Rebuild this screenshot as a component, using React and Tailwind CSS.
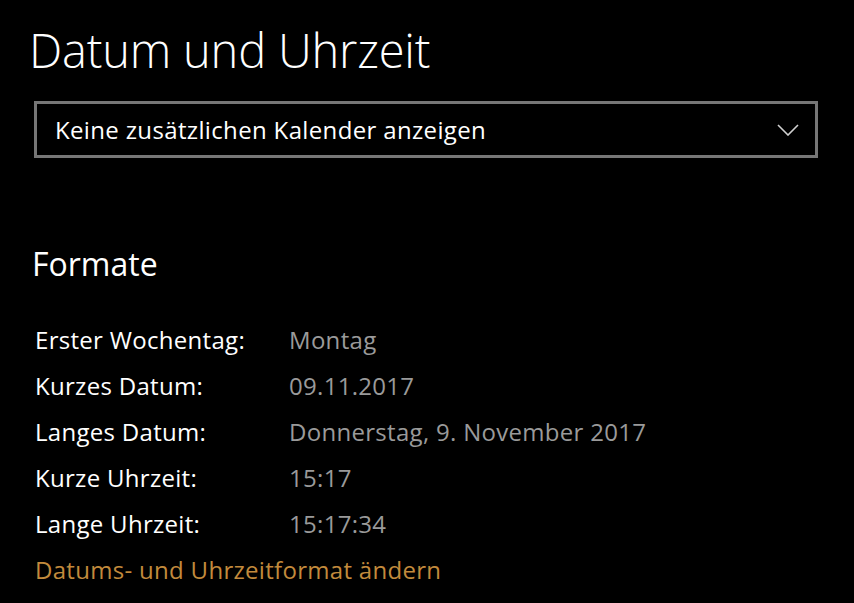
const rows = [
  ['Erster Wochentag:', 'Montag'],
  ['Kurzes Datum:', '09.11.2017'],
  ['Langes Datum:', 'Donnerstag, 9. November 2017'],
  ['Kurze Uhrzeit:', '15:17'],
  ['Lange Uhrzeit:', '15:17:34'],
]

export default function App() {
  return (
    <div
      className="w-[854px] h-[603px] overflow-hidden bg-black text-white pl-[32px] pr-9"
      style={{ fontFamily: '"Open Sans", "Noto Sans", sans-serif' }}
    >
      {/* Header */}
      <h1 className="text-[47px] font-light leading-none tracking-[-0.2px] -ml-[3px] pt-[27px] h-[101px]">
        Datum und Uhrzeit
      </h1>

      {/* Calendar dropdown */}
      <button className="ml-[2px] w-[784px] h-[57px] border-[3px] border-[#767676] flex items-center justify-between pl-[18px] pr-[16px] text-left">
        <span className="text-[24px] leading-none tracking-[0.35px]">
          Keine zusätzlichen Kalender anzeigen
        </span>
        <svg width="22" height="12" viewBox="0 0 22 12" fill="none">
          <path d="M1 1 L11 11 L21 1" stroke="#d0d0d0" strokeWidth="1.6" />
        </svg>
      </button>

      {/* Formate */}
      <h2 className="text-[32px] leading-none mt-[90px]">Formate</h2>

      <div className="mt-[37px] flex flex-col text-[24px] tracking-[0.3px]">
        {rows.map(([label, value]) => (
          <div key={label} className="flex h-[46px] items-center pl-[3px]">
            <span className="w-[254px]">{label}</span>
            <span className="text-[#9a9a9a]">{value}</span>
          </div>
        ))}
        <div className="flex h-[46px] items-center pl-[3px]">
          <a className="text-[#c28a3c]">Datums- und Uhrzeitformat ändern</a>
        </div>
      </div>
    </div>
  )
}
